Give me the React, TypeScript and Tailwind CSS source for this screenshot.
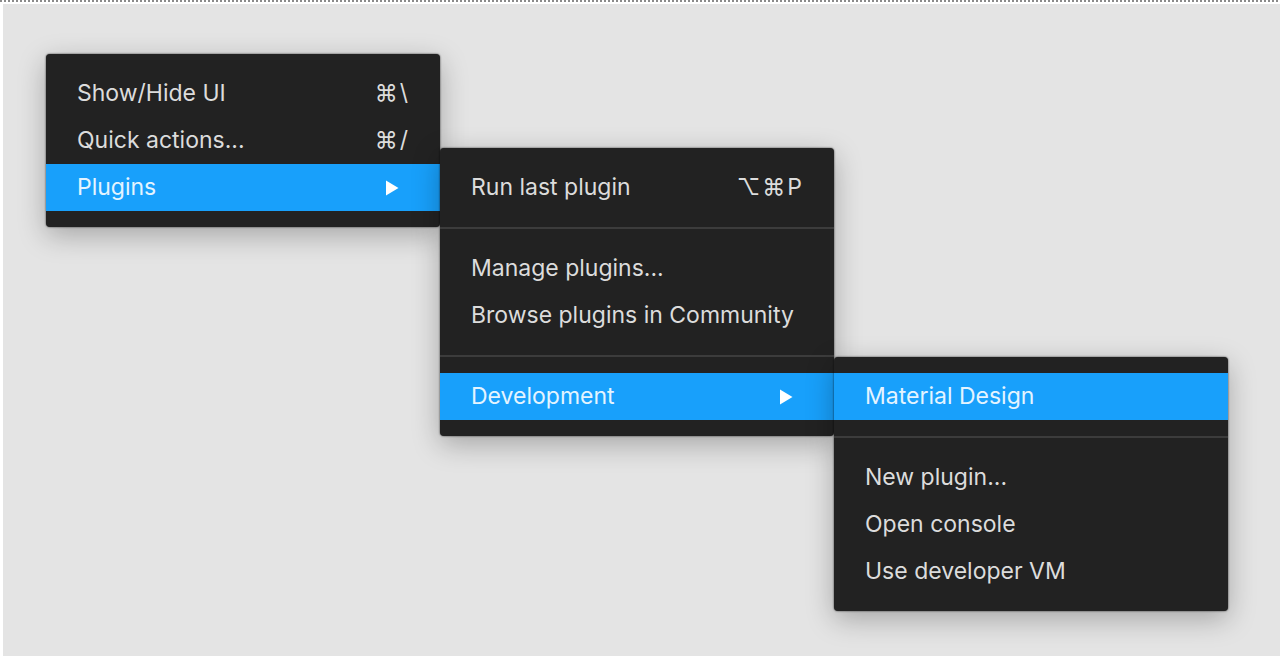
import { Fragment } from "react";

type Item = {
  label: string;
  shortcut?: string[];
  submenu?: boolean;
  active?: boolean;
};

const mainMenu: Item[][] = [
  [
    { label: "Show/Hide UI", shortcut: ["⌘", "\\"] },
    { label: "Quick actions...", shortcut: ["⌘", "/"] },
    { label: "Plugins", submenu: true, active: true },
  ],
];

const pluginsMenu: Item[][] = [
  [{ label: "Run last plugin", shortcut: ["⌥", "⌘", "P"] }],
  [{ label: "Manage plugins..." }, { label: "Browse plugins in Community" }],
  [{ label: "Development", submenu: true, active: true }],
];

const developmentMenu: Item[][] = [
  [{ label: "Material Design", active: true }],
  [{ label: "New plugin..." }, { label: "Open console" }, { label: "Use developer VM" }],
];

function MenuItem({ item }: { item: Item }) {
  return (
    <button
      type="button"
      role="menuitem"
      aria-haspopup={item.submenu ? "menu" : undefined}
      aria-expanded={item.submenu ? true : undefined}
      className={`flex h-[47px] w-full items-center justify-between pl-[31px] text-left whitespace-nowrap ${
        item.submenu ? "pr-[41px]" : "pr-8"
      } ${item.active ? "bg-[#18a0fb] text-[#e4f4ff]" : "text-[#dcdcdc]"}`}
    >
      <span>{item.label}</span>
      {item.shortcut && (
        <span className="flex gap-[2px]">
          {item.shortcut.map((key) => (
            <span key={key}>{key}</span>
          ))}
        </span>
      )}
      {item.submenu && (
        <svg width="14" height="16" viewBox="0 0 14 16" fill="#fff" aria-hidden="true">
          <path d="M1 0.5 13.5 8 1 15.5Z" />
        </svg>
      )}
    </button>
  );
}

function Menu({ name, groups, className = "" }: { name: string; groups: Item[][]; className?: string }) {
  return (
    <div
      role="menu"
      aria-label={name}
      className={`w-[394px] shrink-0 rounded-[4px] bg-[#222] shadow-[0_0_2px_rgba(0,0,0,0.8),0_8px_28px_rgba(0,0,0,0.28)] ${className}`}
    >
      {groups.map((group, i) => (
        <Fragment key={group[0].label}>
          {i > 0 && <hr className="border-t-2 border-[#3c3c3c]" />}
          <div className="py-4">
            {group.map((item) => (
              <MenuItem key={item.label} item={item} />
            ))}
          </div>
        </Fragment>
      ))}
    </div>
  );
}

export default function App() {
  return (
    <div className="flex min-h-screen flex-col bg-white font-['Inter',sans-serif] text-[23px]">
      <div className="h-[2px] bg-[repeating-linear-gradient(90deg,#8a8a8a_0_2px,#ffffff_2px_4px)]" />
      <main className="mt-[2px] mb-[3px] ml-[3px] flex grow items-start overflow-hidden bg-[#e4e4e4] pt-[50px] pl-[43px]">
        <Menu name="Main menu" groups={mainMenu} />
        <Menu name="Plugins" groups={pluginsMenu} className="mt-[94px]" />
        <Menu name="Development" groups={developmentMenu} className="mt-[303px]" />
      </main>
    </div>
  );
}
